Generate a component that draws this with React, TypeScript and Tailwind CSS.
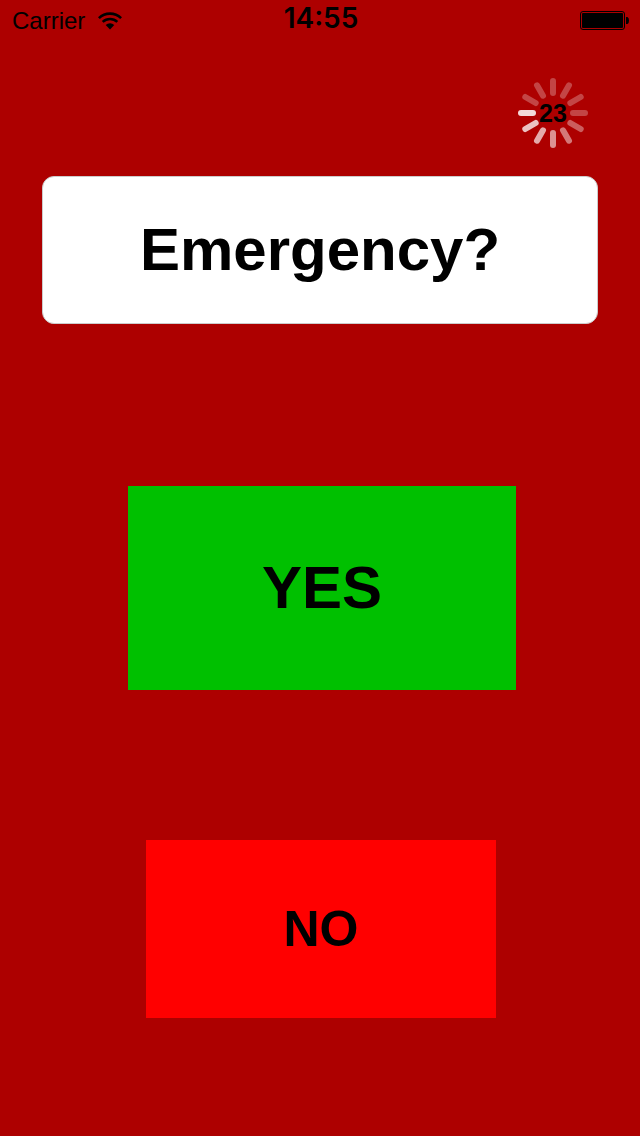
const SPOKE_OPACITIES = [0.27, 0.27, 0.27, 0.27, 0.37, 0.47, 0.57, 0.67, 0.76, 0.85, 0.27, 0.27];

function WifiIcon() {
  return (
    <svg viewBox="0 0 26 18" className="h-[18px] w-[26px]" fill="none" stroke="black" aria-label="Wi-Fi" role="img">
      <path d="M1.9 6.1a15.9 15.9 0 0 1 22.2 0" strokeWidth="2.6" />
      <path d="M5.7 9.9a10.6 10.6 0 0 1 14.6 0" strokeWidth="2.5" />
      <path d="M13 17.6 8.7 13.1a6.2 6.2 0 0 1 8.6 0Z" fill="black" stroke="none" />
    </svg>
  );
}

function BatteryIcon() {
  return (
    <svg viewBox="0 0 50 20" className="h-5 w-[50px]" aria-label="Battery full" role="img">
      <rect x="0.5" y="0.5" width="44" height="18" rx="2.5" fill="none" stroke="black" />
      <rect x="2" y="2" width="41" height="15" rx="1" fill="black" />
      <path d="M46 6h1.5q1.5.5 1.5 3.5t-1.5 3.5H46Z" fill="black" />
    </svg>
  );
}

function Spinner() {
  return (
    <svg viewBox="-35 -35 70 70" className="absolute inset-0 size-full" aria-hidden="true">
      {SPOKE_OPACITIES.map((opacity, i) => (
        <line
          key={i}
          y1="-20"
          y2="-32"
          stroke="white"
          strokeWidth="6"
          strokeLinecap="round"
          strokeOpacity={opacity}
          transform={`rotate(${i * 30})`}
        />
      ))}
    </svg>
  );
}

export default function App() {
  return (
    <div className="min-h-screen bg-[#ad0000] pb-12 font-['Liberation_Sans',Arial,sans-serif] text-black">
      <header className="grid h-[42px] grid-cols-3 items-center pr-[10px] pl-3">
        <div className="flex items-center gap-3">
          <span className="text-2xl leading-10">Carrier</span>
          <WifiIcon />
        </div>
        <time className="pb-1.5 text-center font-['Inter',sans-serif] text-[28px] leading-9 font-semibold">14:55</time>
        <div className="flex justify-end">
          <BatteryIcon />
        </div>
      </header>

      <main className="flex flex-col">
        <div className="flex justify-end pt-9 pr-[52px]" role="timer" aria-label="Seconds remaining">
          <div className="relative flex size-[70px] items-center justify-center">
            <Spinner />
            <span className="relative text-[25px] leading-8 font-bold">23</span>
          </div>
        </div>

        <h1 className="mx-[42px] mt-7 rounded-xl border border-[#cccccc] bg-white py-9 text-center text-[60px] leading-[74px] font-bold">
          Emergency?
        </h1>

        <button
          type="button"
          className="mt-[162px] mr-[124px] ml-32 bg-[#00c000] py-[66px] text-[60px] leading-[72px] font-bold"
        >
          YES
        </button>

        <button
          type="button"
          className="mt-[150px] mr-36 ml-[146px] bg-[#ff0000] py-[59px] text-[50px] leading-[60px] font-bold"
        >
          NO
        </button>
      </main>
    </div>
  );
}
